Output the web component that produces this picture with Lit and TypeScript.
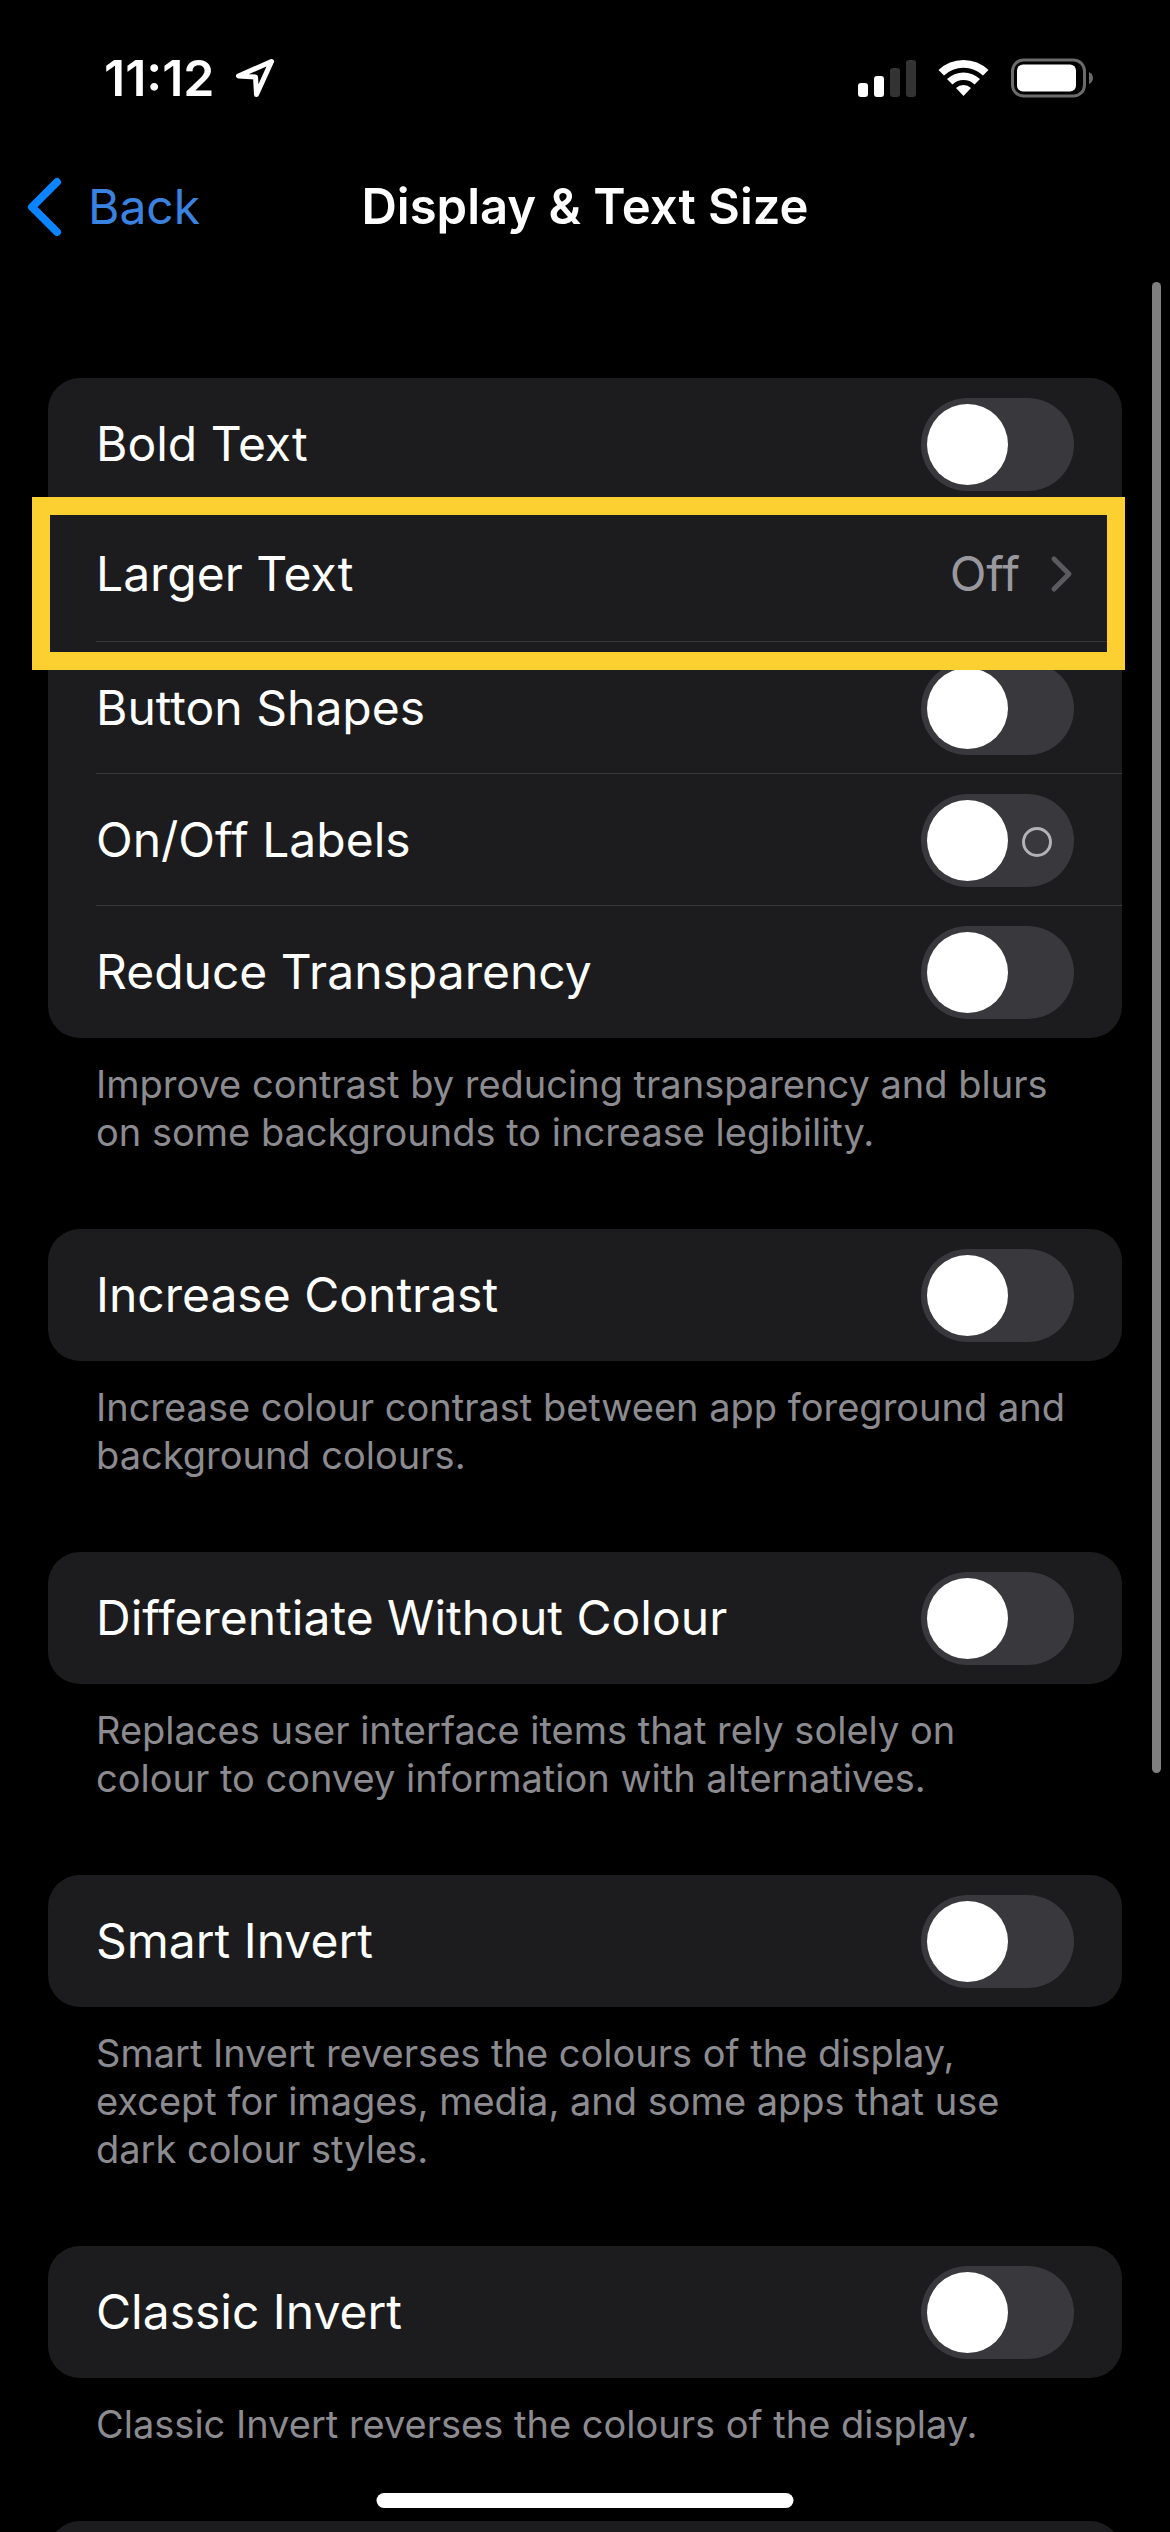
import { LitElement, html, css, svg, nothing } from "lit";
import { customElement, property, state } from "lit/decorators.js";

interface Setting {
  id: string;
  label: string;
  kind: "switch" | "link";
  value?: string;
  showOffMark?: boolean;
  highlighted?: boolean;
}

interface Group {
  settings: Setting[];
  note?: string;
}

const GROUPS: Group[] = [
  {
    settings: [
      { id: "bold-text", label: "Bold Text", kind: "switch" },
      { id: "larger-text", label: "Larger Text", kind: "link", value: "Off", highlighted: true },
      { id: "button-shapes", label: "Button Shapes", kind: "switch" },
      { id: "on-off-labels", label: "On/Off Labels", kind: "switch", showOffMark: true },
      { id: "reduce-transparency", label: "Reduce Transparency", kind: "switch" },
    ],
    note: "Improve contrast by reducing transparency and blurs on some backgrounds to increase legibility.",
  },
  {
    settings: [{ id: "increase-contrast", label: "Increase Contrast", kind: "switch" }],
    note: "Increase colour contrast between app foreground and background colours.",
  },
  {
    settings: [{ id: "differentiate", label: "Differentiate Without Colour", kind: "switch" }],
    note: "Replaces user interface items that rely solely on colour to convey information with alternatives.",
  },
  {
    settings: [{ id: "smart-invert", label: "Smart Invert", kind: "switch" }],
    note: "Smart Invert reverses the colours of the display, except for images, media, and some apps that use dark colour styles.",
  },
  {
    settings: [{ id: "classic-invert", label: "Classic Invert", kind: "switch" }],
    note: "Classic Invert reverses the colours of the display.",
  },
  { settings: [] },
];

@customElement("status-bar")
export class StatusBar extends LitElement {
  static styles = css`
    :host {
      display: block;
    }
    .bar {
      box-sizing: border-box;
      display: flex;
      align-items: center;
      justify-content: space-between;
      height: 141px;
      padding: 15px 76px 0 104px;
      color: #fff;
    }
    .clock {
      display: flex;
      align-items: center;
      gap: 20px;
      font-size: 50px;
      font-weight: 600;
      line-height: 60px;
    }
    .indicators {
      display: flex;
      align-items: center;
      gap: 22px;
    }
    svg {
      display: block;
      flex: none;
    }
  `;

  render() {
    const bars = [
      { x: 0, h: 14, on: true },
      { x: 16, h: 21, on: true },
      { x: 32, h: 29, on: false },
      { x: 48, h: 37, on: false },
    ];
    return html`
      <div class="bar">
        <div class="clock">
          <time>11:12</time>
          <svg width="40" height="40" viewBox="0 0 40 40" aria-hidden="true">
            <path
              d="M36.5 3.5 L3.5 18 L20.5 19 L21.5 36.5 Z"
              fill="none"
              stroke="#fff"
              stroke-width="5"
              stroke-linejoin="round"
            />
          </svg>
        </div>
        <div class="indicators">
          <svg width="58" height="38" viewBox="0 0 58 38" aria-hidden="true">
            ${bars.map(
              (b) =>
                svg`<rect x=${b.x} y=${38 - b.h} width="10" height=${b.h} rx="3" fill=${b.on ? "#fff" : "#333"} />`,
            )}
          </svg>
          <svg width="51" height="38" viewBox="0 0 51 38" aria-hidden="true">
            <path d="M0.5 11 A36 36 0 0 1 50.5 11 L45 16.5 A28.5 28.5 0 0 0 6 16.5 Z" fill="#fff" />
            <path d="M9 20 A24 24 0 0 1 42 20 L36.5 25.5 A16 16 0 0 0 14.5 25.5 Z" fill="#fff" />
            <path d="M18 29 A11 11 0 0 1 33 29 L25.5 37 Z" fill="#fff" />
          </svg>
          <svg width="83" height="40" viewBox="0 0 83 40" aria-hidden="true">
            <rect x="1.5" y="2" width="72" height="36" rx="11" fill="none" stroke="#6b6b6b" stroke-width="3" />
            <rect x="6" y="6.5" width="59" height="27" rx="6" fill="#fff" />
            <path d="M78 14 Q82 16 82 20 Q82 24 78 26 Z" fill="#6b6b6b" />
          </svg>
        </div>
      </div>
    `;
  }
}

@customElement("setting-row")
export class SettingRow extends LitElement {
  @property({ attribute: false }) setting!: Setting;
  @state() private on = false;

  static styles = css`
    :host {
      display: block;
    }
    .row {
      position: relative;
      padding-left: 48px;
      min-height: 132px;
    }
    .content {
      box-sizing: border-box;
      display: flex;
      align-items: center;
      gap: 28px;
      min-height: 132px;
      padding-right: 48px;
      color: #fff;
      font-size: 48px;
      line-height: 60px;
      text-decoration: none;
    }
    :host(:not(:last-child)) .content {
      box-shadow: inset 0 -1px #38383a;
    }
    .link {
      padding-bottom: 4px;
    }
    .label {
      flex: 1;
    }
    .value {
      color: #98989e;
    }
    .switch {
      position: relative;
      display: block;
      flex: none;
      width: 153px;
      height: 93px;
    }
    .switch input {
      appearance: none;
      display: flex;
      box-sizing: border-box;
      width: 100%;
      height: 100%;
      margin: 0;
      padding: 6px;
      border-radius: 47px;
      background: #39393d;
    }
    .switch input::before {
      content: "";
      width: 81px;
      height: 81px;
      border-radius: 50%;
      background: #fff;
    }
    .switch input:checked {
      justify-content: flex-end;
      background: #30d158;
    }
    .off-mark {
      position: absolute;
      top: 33px;
      right: 22px;
      box-sizing: border-box;
      width: 30px;
      height: 30px;
      border: 3px solid #b3b3b6;
      border-radius: 50%;
    }
    .highlight {
      position: absolute;
      z-index: 2;
      inset: -13px -3px -28px -16px;
      border: 18px solid #fdd031;
      pointer-events: none;
    }
    svg {
      display: block;
      flex: none;
    }
  `;

  private toggle(e: Event) {
    this.on = (e.target as HTMLInputElement).checked;
  }

  render() {
    const s = this.setting;
    return html`
      <div class="row">
        ${s.kind === "link"
          ? html`
              <a class="content link" href="#${s.id}">
                <span class="label">${s.label}</span>
                <span class="value">${s.value}</span>
                <svg width="26" height="38" viewBox="0 0 26 38" aria-hidden="true">
                  <path
                    d="M6 4 L21 19 L6 34"
                    fill="none"
                    stroke="#5b5b5f"
                    stroke-width="5"
                    stroke-linecap="round"
                    stroke-linejoin="round"
                  />
                </svg>
              </a>
            `
          : html`
              <label class="content" for=${s.id}>
                <span class="label">${s.label}</span>
                <span class="switch">
                  <input id=${s.id} type="checkbox" role="switch" .checked=${this.on} @change=${this.toggle} />
                  ${s.showOffMark && !this.on ? html`<span class="off-mark"></span>` : nothing}
                </span>
              </label>
            `}
        ${s.highlighted ? html`<div class="highlight"></div>` : nothing}
      </div>
    `;
  }
}

@customElement("app-root")
export class AppRoot extends LitElement {
  static styles = css`
    :host {
      display: block;
      font-family: Inter, "Liberation Sans", sans-serif;
      background: #000;
    }
    .screen {
      position: relative;
      display: flex;
      flex-direction: column;
      height: 100vh;
      overflow: hidden;
      background: #000;
    }
    .nav {
      display: grid;
      grid-template-columns: 1fr auto 1fr;
      align-items: center;
      min-height: 132px;
      padding: 0 26px;
      font-size: 48px;
      line-height: 60px;
    }
    .back {
      display: flex;
      align-items: center;
      justify-self: start;
      gap: 24px;
      color: #3a82e0;
      text-decoration: none;
    }
    .title {
      margin: 0;
      color: #fff;
      font-size: 49px;
      font-weight: 600;
    }
    .body {
      position: relative;
      flex: 1;
      min-height: 0;
    }
    .list {
      box-sizing: border-box;
      height: 100%;
      padding: 105px 48px 0;
      overflow-y: auto;
      scrollbar-width: none;
    }
    .card {
      min-height: 132px;
      border-radius: 32px;
      background: #1c1c1e;
    }
    .note {
      margin: 0;
      padding: 22px 48px 73px;
      color: #8b8b90;
      font-size: 38px;
      line-height: 48px;
    }
    .thumb {
      position: absolute;
      top: 9px;
      right: 9px;
      width: 9px;
      height: 66%;
      border-radius: 5px;
      background: #7f7f7f;
    }
    .home {
      position: absolute;
      left: 50%;
      bottom: 24px;
      width: 417px;
      height: 15px;
      border-radius: 8px;
      background: #fff;
      transform: translateX(-50%);
    }
    svg {
      display: block;
      flex: none;
    }
  `;

  render() {
    return html`
      <div class="screen">
        <status-bar></status-bar>
        <header class="nav">
          <a class="back" href="#accessibility">
            <svg width="38" height="60" viewBox="0 0 38 60" aria-hidden="true">
              <path
                d="M31 5 L6 30 L31 55"
                fill="none"
                stroke="#0a84ff"
                stroke-width="8"
                stroke-linecap="round"
                stroke-linejoin="round"
              />
            </svg>
            <span>Back</span>
          </a>
          <h1 class="title">Display &amp; Text Size</h1>
        </header>
        <main class="body">
          <div class="list">
            ${GROUPS.map(
              (g) => html`
                <section>
                  <div class="card">${g.settings.map((s) => html`<setting-row .setting=${s}></setting-row>`)}</div>
                  ${g.note ? html`<p class="note">${g.note}</p>` : nothing}
                </section>
              `,
            )}
          </div>
          <div class="thumb"></div>
        </main>
        <div class="home"></div>
      </div>
    `;
  }
}
